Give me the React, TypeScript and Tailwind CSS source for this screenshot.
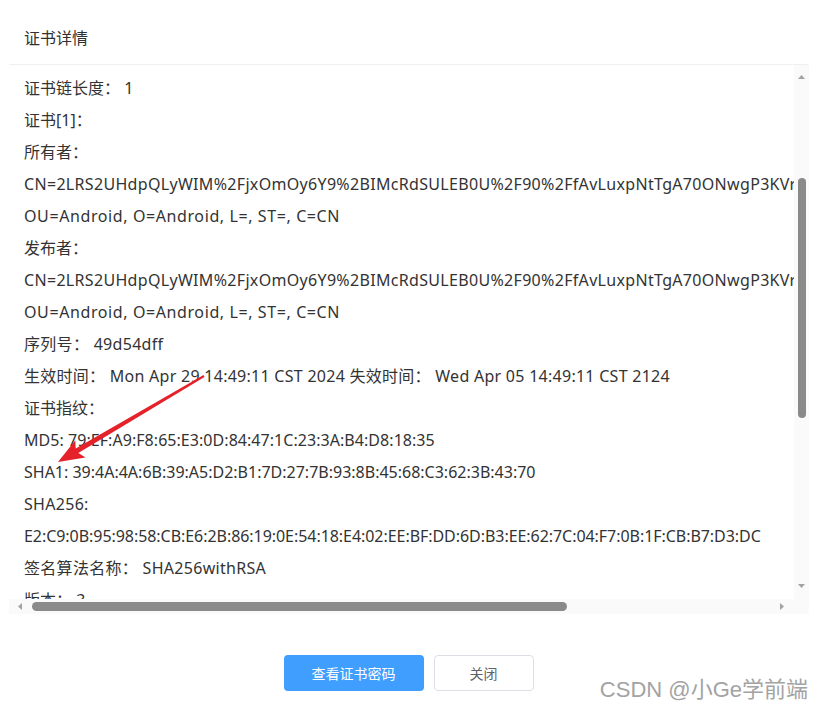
import React from "react";

const FONT = "[font-family:'Noto_Sans','Noto_Sans_CJK_SC',sans-serif]";

const CN_LINE =
  "CN=2LRS2UHdpQLyWIM%2FjxOmOy6Y9%2BIMcRdSULEB0U%2F90%2FfAvLuxpNtTgA70ONwgP3KVrQ%3D%3D, ";
const OU_LINE = "OU=Android, O=Android, L=, ST=, C=CN";

type Line = { text: string; cls?: string };

const lines: Line[] = [
  { text: "证书链长度： 1" },
  { text: "证书[1]：" },
  { text: "所有者：" },
  { text: CN_LINE, cls: "tracking-[0.32px]" },
  { text: OU_LINE, cls: "tracking-[0.6px]" },
  { text: "发布者：" },
  { text: CN_LINE, cls: "tracking-[0.32px]" },
  { text: OU_LINE, cls: "tracking-[0.6px]" },
  { text: "序列号： 49d54dff", cls: "tracking-[0.3px]" },
  {
    text: "生效时间： Mon Apr 29 14:49:11 CST 2024 失效时间： Wed Apr 05 14:49:11 CST 2124",
    cls: "tracking-[0.27px]",
  },
  { text: "证书指纹：" },
  { text: "MD5: 79:EF:A9:F8:65:E3:0D:84:47:1C:23:3A:B4:D8:18:35", cls: "tracking-[0.05px]" },
  { text: "SHA1: 39:4A:4A:6B:39:A5:D2:B1:7D:27:7B:93:8B:45:68:C3:62:3B:43:70" },
  { text: "SHA256:", cls: "tracking-[0.3px]" },
  {
    text: "E2:C9:0B:95:98:58:CB:E6:2B:86:19:0E:54:18:E4:02:EE:BF:DD:6D:B3:EE:62:7C:04:F7:0B:1F:CB:B7:D3:DC",
    cls: "tracking-[-0.05px]",
  },
  { text: "签名算法名称： SHA256withRSA", cls: "tracking-[0.3px]" },
  { text: "版本： 3" },
  { text: "公钥类型： RSA" },
];

const Tri = ({ dir }: { dir: "up" | "down" | "left" | "right" }) => {
  const pts = {
    up: "0,4 3.5,0 7,4",
    down: "0,0 7,0 3.5,4",
    left: "4,0 4,7 0,3.5",
    right: "0,0 0,7 4,3.5",
  }[dir];
  const vertical = dir === "up" || dir === "down";
  return (
    <svg width={vertical ? 7 : 4} height={vertical ? 4 : 7} className="block">
      <polygon points={pts} fill="#a3a3a3" />
    </svg>
  );
};

export default function App() {
  return (
    <div className={`relative w-[817px] h-[710px] bg-white overflow-hidden ${FONT}`}>
      <div className="ml-[9px] w-[800px] flex flex-col">
        {/* Header */}
        <div className="h-[65px] pt-[26px] pl-[15px] border-b border-[#f0f0f0]">
          <h2 className="text-[16px] leading-[24px] text-[#303133]">证书详情</h2>
        </div>

        {/* Scroll body */}
        <div className="h-[549px] flex flex-col">
          <div className="flex h-[534px]">
            <div className="flex-1 overflow-hidden">
              <div className="-mt-[25px] pl-[15px] whitespace-nowrap text-[16px] leading-[32px] text-[#333333]">
                {/* row scrolled mostly out of view: only bracket tails show */}
                <div className="h-[32px]">
                  <span className="ml-[156px]">[</span>
                  <span className="ml-[36px]">]</span>
                </div>
                {lines.map((l, i) => (
                  <div key={i} className={`h-[32px] ${l.cls ?? ""}`}>
                    {l.text}
                  </div>
                ))}
              </div>
            </div>
            <div className="w-[15px] bg-[#fafafa] flex flex-col items-center">
              <div className="mt-[10px]">
                <Tri dir="up" />
              </div>
              <div className="mt-[99px] w-[8px] h-[240px] rounded-full bg-[#8a8a8a]" />
              <div className="mt-auto mb-[11px]">
                <Tri dir="down" />
              </div>
            </div>
          </div>
          <div className="flex h-[15px] bg-[#fafafa]">
            <div className="flex-1 flex items-center">
              <div className="ml-[9px]">
                <Tri dir="left" />
              </div>
              <div className="ml-[10px] w-[535px] h-[9px] rounded-full bg-[#8a8a8a]" />
              <div className="ml-auto mr-[10px]">
                <Tri dir="right" />
              </div>
            </div>
            <div className="w-[15px]" />
          </div>
        </div>
      </div>

      {/* Footer */}
      <div className="flex justify-center gap-[10px] pt-[41px]">
        <button className="w-[140px] h-[36px] rounded-[4px] bg-[#409eff] text-white text-[14px]">
          查看证书密码
        </button>
        <button className="w-[100px] h-[36px] rounded-[4px] border border-[#dcdfe6] bg-white text-[#606266] text-[14px]">
          关闭
        </button>
      </div>

      {/* Watermark */}
      <div className="absolute right-[9px] top-[677px] text-[22px] leading-[26px] text-[#a3a3a3] [font-family:'Liberation_Sans','Noto_Sans_CJK_SC',sans-serif] [text-shadow:0_0_2px_#ffffff]">
        CSDN @小Ge学前端
      </div>

      {/* Annotation arrow */}
      <svg
        className="absolute inset-0 pointer-events-none"
        width="817"
        height="710"
        viewBox="0 0 817 710"
      >
        <polygon
          points="58,462 85.5,457.4 78.3,453 204.5,376.9 203.5,375.1 75.7,448.6 75.3,440.2"
          fill="#e5222a"
        />
      </svg>
    </div>
  );
}
